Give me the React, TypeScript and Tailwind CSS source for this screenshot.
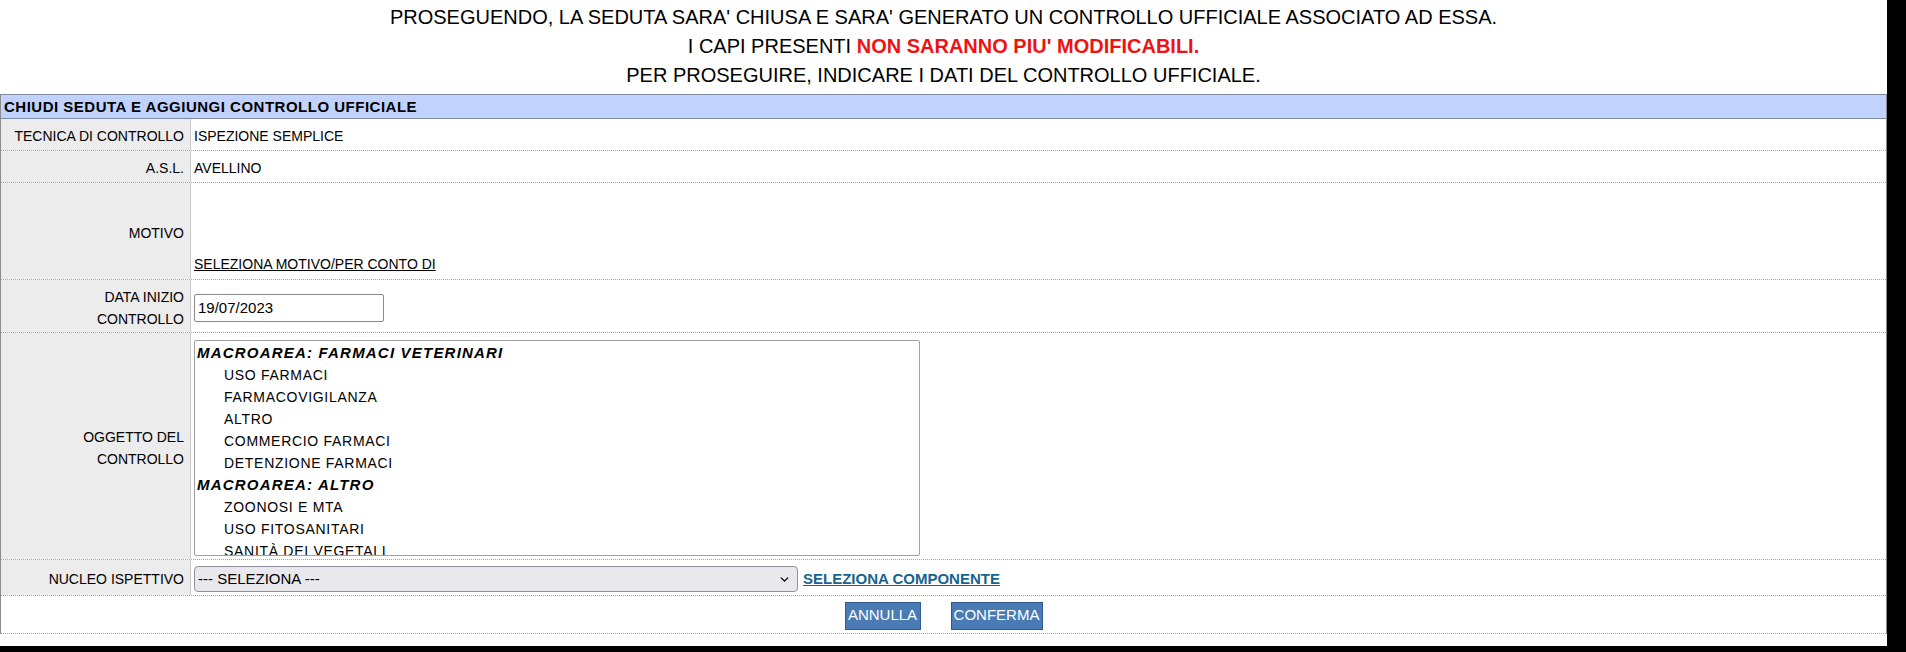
import { ChevronDown } from "lucide-react";

const font = "font-['Liberation_Sans',Arial,sans-serif]";

const oggetti: { label: string; group?: boolean }[] = [
  { label: "MACROAREA: FARMACI VETERINARI", group: true },
  { label: "USO FARMACI" },
  { label: "FARMACOVIGILANZA" },
  { label: "ALTRO" },
  { label: "COMMERCIO FARMACI" },
  { label: "DETENZIONE FARMACI" },
  { label: "MACROAREA: ALTRO", group: true },
  { label: "ZOONOSI E MTA" },
  { label: "USO FITOSANITARI" },
  { label: "SANITÀ DEI VEGETALI" },
];

function Row({ label, children, className = "" }: { label: React.ReactNode; children: React.ReactNode; className?: string }) {
  return (
    <div className={`grid grid-cols-[190px_1fr] border-b border-dotted border-[#a5a5a5] ${className}`}>
      <div className="bg-[#ececec] border-r border-[#c9c9c9] flex items-center justify-end pt-[3px] pr-[6px] text-right leading-[22px]">
        {label}
      </div>
      <div className="pl-[3px] pt-[3px] flex items-center">{children}</div>
    </div>
  );
}

export default function App() {
  return (
    <div className={`w-[1906px] h-[652px] bg-black flex items-start ${font} text-[14px] text-black`}>
      <div className="w-[1887px] h-[646px] bg-white flex flex-col">
        {/* Avviso */}
        <div className="pt-[3px] mb-[4px] text-center text-[20px] leading-[29px]">
          <p>PROSEGUENDO, LA SEDUTA SARA' CHIUSA E SARA' GENERATO UN CONTROLLO UFFICIALE ASSOCIATO AD ESSA.</p>
          <p>
            I CAPI PRESENTI <span className="font-bold text-[#f01212]">NON SARANNO PIU' MODIFICABILI.</span>
          </p>
          <p>PER PROSEGUIRE, INDICARE I DATI DEL CONTROLLO UFFICIALE.</p>
        </div>

        {/* Tabella */}
        <div className="border-x border-[#8c8c8c]">
          <div className="h-[25px] bg-[#c1d3fc] border-y border-[#7d8da3] flex items-center pt-[1px] pl-[3px] font-bold text-[15px] tracking-[0.5px]">
            CHIUDI SEDUTA E AGGIUNGI CONTROLLO UFFICIALE
          </div>

          <Row label="TECNICA DI CONTROLLO" className="h-[32px]">ISPEZIONE SEMPLICE</Row>
          <Row label="A.S.L." className="h-[32px]">AVELLINO</Row>
          <Row label="MOTIVO" className="h-[97px]">
            <div className="self-end pb-[4px]">
              <a className="underline cursor-pointer">SELEZIONA MOTIVO/PER CONTO DI</a>
            </div>
          </Row>
          <Row label={<>DATA INIZIO<br />CONTROLLO</>} className="h-[53px]">
            <input
              defaultValue="19/07/2023"
              className="w-[190px] h-[28px] border border-[#8a8a8a] rounded-[2px] px-[3px] text-[15px] outline-none"
            />
          </Row>
          <Row label={<>OGGETTO DEL<br />CONTROLLO</>} className="h-[227px]">
            <div className="self-start mt-[4px] w-[726px] h-[216px] border border-[#a0a0a0] rounded-[2px] overflow-hidden pt-[1px]">
              {oggetti.map((o) =>
                o.group ? (
                  <div key={o.label} className="h-[22px] leading-[22px] pl-[2px] text-[15px] font-bold italic tracking-[1.2px]">
                    {o.label}
                  </div>
                ) : (
                  <div key={o.label} className="h-[22px] leading-[22px] pl-[29px] tracking-[0.7px]">
                    {o.label}
                  </div>
                )
              )}
            </div>
          </Row>
          <Row label="NUCLEO ISPETTIVO" className="h-[36px]">
            <div className="flex items-center gap-[5px]">
              <div className="w-[604px] h-[26px] bg-[#e9e9ed] border border-[#8f8f9d] rounded-[4px] flex items-center justify-between pl-[3px] pr-[6px] text-[15px]">
                <span>--- SELEZIONA ---</span>
                <ChevronDown className="w-[13px] h-[13px]" strokeWidth={2.5} />
              </div>
              <a className="font-bold underline text-[15px] text-[#16648e] cursor-pointer">SELEZIONA COMPONENTE</a>
            </div>
          </Row>
          <div className="h-[38px] pt-[2px] border-b border-dotted border-[#a5a5a5] flex items-center justify-center gap-[30px]">
            <button className="h-[28px] w-[76px] bg-[#4a7bb5] border border-[#2f5b8e] text-white text-[15px]">ANNULLA</button>
            <button className="h-[28px] w-[92px] bg-[#4a7bb5] border border-[#2f5b8e] text-white text-[15px]">CONFERMA</button>
          </div>
        </div>
      </div>
    </div>
  );
}
